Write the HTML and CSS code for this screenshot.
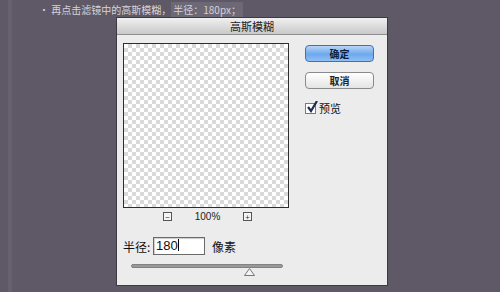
FILE: index.html
```html
<!DOCTYPE html>
<html lang="zh-CN">
<head>
  <meta charset="UTF-8">
  <title>高斯模糊</title>
  <link rel="stylesheet" href="styles.css">
</head>
<body>
<div class="page">
  <div class="stripe"></div>
  <div class="content">
    <p class="step">· 再点击滤镜中的高斯模糊，<span class="hl">半径：180px；</span></p>

    <div class="dialog">
      <div class="titlebar">高斯模糊</div>
      <div class="dialog-body">
        <div class="left">
          <div class="preview"></div>
          <div class="zoom">
            <span class="zbtn">&minus;</span>
            <span class="zval">100%</span>
            <span class="zbtn">+</span>
          </div>
          <div class="radius">
            <label>半径:</label>
            <div class="field">180<span class="caret"></span></div>
            <span class="unit">像素</span>
          </div>
          <div class="slider">
            <div class="track"></div>
            <svg class="thumb" width="11" height="8" viewBox="0 0 11 8"><path d="M5.5 0.5 L10.5 7.5 L0.5 7.5 Z" fill="#f4f4f4" stroke="#777"/></svg>
          </div>
        </div>
        <div class="right">
          <div class="btn primary">确定</div>
          <div class="btn">取消</div>
          <div class="check">
            <span class="box">
              <svg width="12" height="12" viewBox="0 0 12 12"><path d="M2 6 L5 10 L11 0" fill="none" stroke="#1d2b55" stroke-width="2.2"/></svg>
            </span>
            预览
          </div>
        </div>
      </div>
    </div>
  </div>
</div>
</body>
</html>
```

FILE: styles.css
```css
body { margin: 0; background-color: #5f5967; font-family: "Noto Sans CJK SC", "Liberation Sans", sans-serif; }
.page { display: flex; height: 292px; overflow: hidden; }
.stripe { width: 4px; margin-left: 8px; background-color: #67616f; }
.content { padding-left: 27px; }

.step { margin: 3px 0 0 0; font-size: 10px; line-height: 14px; color: #d6d3da; }
.hl { background-color: #6d6875; padding: 0 2px; }

.dialog { margin: 0 0 0 77px; width: 270px; height: 267px; border: 1px solid #3d3a42; background-color: #ececec; }
.titlebar { height: 16px; line-height: 16px; text-align: center; font-size: 11px; color: #222; background: linear-gradient(#f0f0f0, #c9c9c9); border-bottom: 1px solid #8e8e8e; }
.dialog-body { display: flex; padding: 8px 0 0 6px; }

.left { width: 167px; }
.preview {
  width: 164px; height: 163px;
  border: 1px solid #2d2d2d;
  background-color: #fff;
  background-image: conic-gradient(#d9d9d9 25%, #fff 0 50%, #d9d9d9 0 75%, #fff 0);
  background-size: 8px 8px;
}
.zoom { display: flex; align-items: center; justify-content: space-between; padding: 3px 38px 0 40px; font-size: 10px; color: #222; }
.zbtn { width: 7px; height: 7px; border: 1px solid #555; font-size: 8px; line-height: 7px; text-align: center; color: #333; background-color: #f4f4f4; }
.zval { font-family: "Liberation Sans", sans-serif; }

.radius { display: flex; align-items: center; margin-top: 15px; font-size: 12px; color: #111; }
.radius label { width: 30px; }
.field { width: 48px; height: 16px; line-height: 16px; border: 1px solid #6a6a6a; background-color: #fff; padding-left: 2px; font-family: "Liberation Sans", sans-serif; font-size: 13px; box-shadow: inset 1px 1px 1px rgba(0,0,0,0.2); }
.caret { display: inline-block; width: 1px; height: 12px; background-color: #000; vertical-align: -1px; }
.unit { margin-left: 7px; }

.slider { position: relative; margin: 9px 0 0 8px; width: 152px; height: 14px; }
.track { height: 2px; border-radius: 2px; background-color: #999; border: 1px solid #828282; }
.thumb { position: absolute; left: 113px; top: 4px; }

.right { display: flex; flex-direction: column; padding-left: 15px; padding-top: 2px; }
.btn { width: 67px; height: 15px; line-height: 15px; text-align: center; font-size: 10px; font-weight: bold; color: #222; border: 1px solid #8a8a8a; border-radius: 4px; background: linear-gradient(#ffffff, #e4e4e4); margin-bottom: 10px; }
.btn.primary { border-color: #4a6fa8; background: linear-gradient(#b8d5f7, #6ea8ec 55%, #8fc0f5); color: #0e1f3d; }
.check { display: flex; align-items: center; font-size: 11px; color: #111; margin-top: 1px; }
.box { position: relative; width: 9px; height: 9px; border: 1px solid #7a7a7a; background-color: #fff; margin-right: 3px; }
.box svg { position: absolute; left: 0; top: -3px; }
```
